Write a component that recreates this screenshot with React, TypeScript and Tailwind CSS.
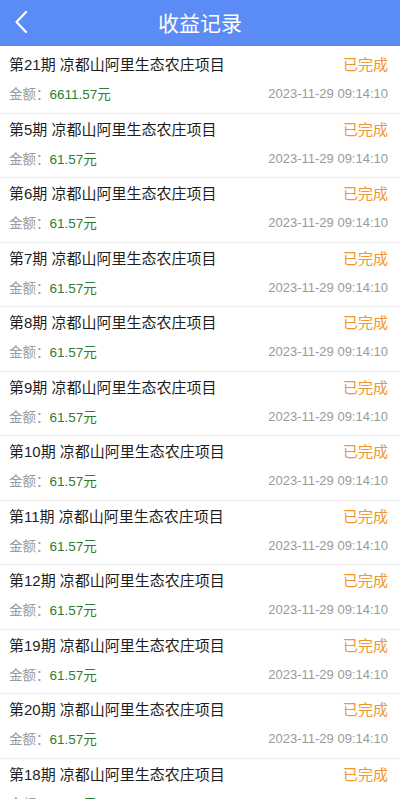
const records = [
  { period: 21, amount: "6611.57" },
  { period: 5, amount: "61.57" },
  { period: 6, amount: "61.57" },
  { period: 7, amount: "61.57" },
  { period: 8, amount: "61.57" },
  { period: 9, amount: "61.57" },
  { period: 10, amount: "61.57" },
  { period: 11, amount: "61.57" },
  { period: 12, amount: "61.57" },
  { period: 19, amount: "61.57" },
  { period: 20, amount: "61.57" },
  { period: 18, amount: "61.57" },
];

export default function App() {
  return (
    <div
      className="w-[400px] h-[799px] overflow-hidden bg-white"
      style={{ fontFamily: '"Liberation Sans", Arial, "Noto Sans CJK SC", sans-serif' }}
    >
      <header className="h-[46px] bg-[#5b8cf6] flex items-center relative">
        <button className="absolute left-[12px] top-[9px] w-[18px] h-[26px] flex items-center justify-center">
          <svg width="14" height="24" viewBox="0 0 14 24" fill="none">
            <path d="M12 2 L2.5 12 L12 22" stroke="white" strokeWidth="2.2" strokeLinecap="round" strokeLinejoin="round" />
          </svg>
        </button>
        <h1 className="flex-1 text-center text-white text-[21px] leading-none">收益记录</h1>
      </header>

      <ul className="pt-[3px]">
        {records.map((r) => (
          <li key={r.period} className="h-[64.5px] border-b border-[#eeeeee] pl-[9px] pr-[12px] flex flex-col">
            <div className="flex items-center justify-between h-[33px]">
              <span className="text-[15px] text-[#1e1e1e]">第{r.period}期 凉都山阿里生态农庄项目</span>
              <span className="text-[15px] text-[#f29530]">已完成</span>
            </div>
            <div className="flex items-center justify-between h-[27px]">
              <span className="text-[13.5px]">
                <span className="text-[#9a9a9a]">金额：</span>
                <span className="text-[#2f7d33]">{r.amount}元</span>
              </span>
              <span className="text-[13px] text-[#9a9a9a] -mt-[3px]">2023-11-29 09:14:10</span>
            </div>
          </li>
        ))}
      </ul>
    </div>
  );
}
